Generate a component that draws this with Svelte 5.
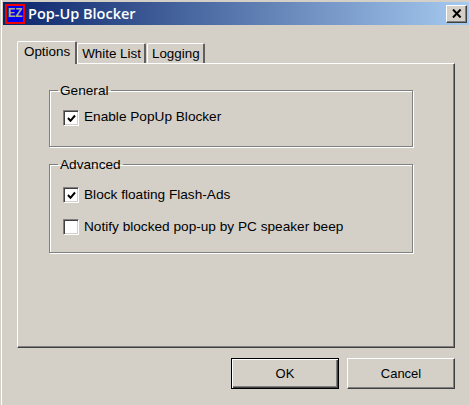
<script lang="ts">
	let tabs = ['Options', 'White List', 'Logging'];
	let activeTab = 'Options';
</script>

<div class="window">
	<div class="titlebar">
		<div class="app-icon"><span>EZ</span></div>
		<div class="title">Pop-Up Blocker</div>
		<button class="close" aria-label="Close">
			<svg width="10" height="9" viewBox="0 0 10 9">
				<path d="M1 0.5 L8.6 8.5 M8.6 0.5 L1 8.5" stroke="#000" stroke-width="2" fill="none" />
			</svg>
		</button>
	</div>

	<div class="content">
		<div class="tabs">
			{#each tabs as tab}
				<div class="tab" class:active={tab === activeTab}>{tab}</div>
			{/each}
		</div>

		<div class="panel">
			<fieldset class="group general">
				<legend>General</legend>
				<label class="check"><span class="box on"><svg width="9" height="9" viewBox="0 0 9 9"><path d="M1 4 L3.5 6.8 L8 1.5" stroke="#000" stroke-width="2" fill="none" /></svg></span>Enable PopUp Blocker</label>
			</fieldset>

			<fieldset class="group advanced">
				<legend>Advanced</legend>
				<label class="check"><span class="box on"><svg width="9" height="9" viewBox="0 0 9 9"><path d="M1 4 L3.5 6.8 L8 1.5" stroke="#000" stroke-width="2" fill="none" /></svg></span>Block floating Flash-Ads</label>
				<label class="check"><span class="box"></span>Notify blocked pop-up by PC speaker beep</label>
			</fieldset>
		</div>

		<div class="buttons">
			<button class="btn default">OK</button>
			<button class="btn">Cancel</button>
		</div>
	</div>
</div>

<style>
	:global(body) {
		margin: 0;
		background: #d4d0c8;
	}

	.window {
		width: 469px;
		height: 405px;
		box-sizing: border-box;
		padding: 2px 0 0 3px;
		background: #d4d0c8;
		border-left: 1px solid #d4d0c8;
		box-shadow: inset 1px 0 0 #fff;
		font-family: "Liberation Sans", Arial, sans-serif;
		font-size: 13px;
		color: #000;
		overflow: hidden;
	}

	.titlebar {
		height: 23px;
		display: flex;
		align-items: center;
		padding: 0 2px 0 2px;
		margin-left: -1px;
		background: linear-gradient(90deg, #0a246a 0%, #a6caf0 100%);
	}

	.app-icon {
		width: 16px;
		height: 16px;
		border: 2px solid #f00000;
		background: #0000f0;
		display: flex;
		align-items: center;
		justify-content: center;
		overflow: hidden;
		flex: none;
	}

	.app-icon span {
		font-family: "Liberation Mono", monospace;
		font-weight: bold;
		font-size: 13px;
		letter-spacing: -0.5px;
		color: #b0ae70;
	}

	.title {
		margin-left: 3px;
		color: #fff;
		font-family: "Open Sans", sans-serif;
		font-weight: 600;
		font-size: 14.5px;
		flex: 1;
	}

	.close {
		width: 21px;
		height: 18px;
		padding: 0;
		display: flex;
		align-items: center;
		justify-content: center;
		background: #d4d0c8;
		border: 1px solid;
		border-color: #fff #404040 #404040 #fff;
		box-shadow: inset -1px -1px 0 #808080;
	}

	.content {
		padding: 16px 14px 0 13px;
	}

	.tabs {
		display: flex;
		align-items: flex-end;
		height: 22px;
		position: relative;
		z-index: 1;
		font-size: 13.4px;
	}

	.tab {
		height: 20px;
		box-sizing: border-box;
		padding: 2px 3px 0 4px;
		border: 1px solid #fff;
		border-bottom: none;
		border-right: 2px solid #606060;
		border-radius: 2px 2px 0 0;
		margin-right: 1px;
		background: #d4d0c8;
		line-height: 16px;
	}

	.tab.active {
		height: 23px;
		margin-bottom: -1px;
		padding: 2px 5px 0 6px;
		margin-right: 0;
	}

	.panel {
		height: 285px;
		box-sizing: border-box;
		border: 1px solid;
		border-color: #fff #404040 #404040 #fff;
		box-shadow: inset -1px -1px 0 #808080;
		padding: 19px 41px 0 31px;
		display: flex;
		flex-direction: column;
		gap: 10px;
	}

	.group {
		margin: 0;
		padding: 0 0 0 13px;
		border: 1px solid #808080;
		border-radius: 0;
		box-shadow: 1px 1px 0 #fff, inset 1px 1px 0 #fff;
		display: flex;
		flex-direction: column;
		min-width: 0;
		font-size: 13.65px;
	}

	.group.general {
		height: 62px;
	}

	.group.advanced {
		height: 94px;
	}

	legend {
		padding: 0 2px;
		margin-left: -5px;
		line-height: 15px;
	}

	.check {
		display: flex;
		align-items: flex-start;
		gap: 5px;
		height: 16px;
		line-height: 14px;
		margin-top: 12px;
		white-space: nowrap;
	}

	.advanced .check {
		margin-top: 15px;
		line-height: 15px;
	}

	.advanced .check + .check {
		margin-top: 16px;
	}

	.box {
		width: 16px;
		height: 16px;
		box-sizing: border-box;
		flex: none;
		background: #fff;
		border: 1px solid;
		border-color: #808080 #fff #fff #808080;
		box-shadow: inset 1px 1px 0 #404040, inset -1px -1px 0 #d4d0c8;
		display: flex;
		align-items: center;
		justify-content: center;
	}

	.buttons {
		display: flex;
		justify-content: flex-end;
		gap: 8px;
		margin-top: 10px;
	}

	.btn {
		width: 108px;
		height: 31px;
		padding: 0;
		background: #d4d0c8;
		font: inherit;
		color: #000;
		border: 1px solid;
		border-color: #fff #404040 #404040 #fff;
		box-shadow: inset -1px -1px 0 #808080;
	}

	.btn.default {
		border: 1px solid #000;
		box-shadow: inset 1px 1px 0 #fff, inset -1px -1px 0 #404040, inset -2px -2px 0 #808080;
	}
</style>
